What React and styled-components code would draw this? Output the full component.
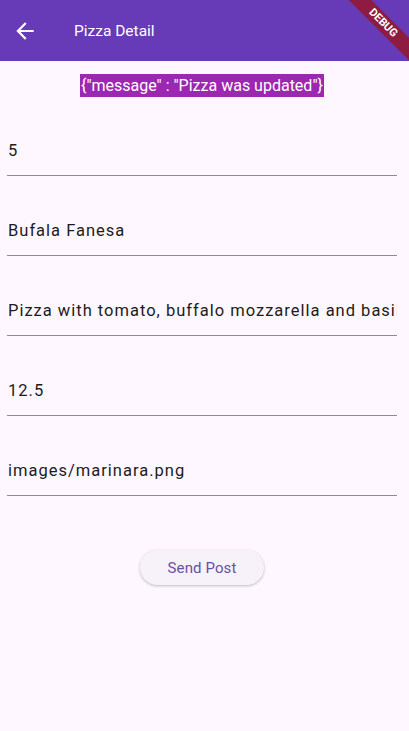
import React from "react";
import styled, { createGlobalStyle } from "styled-components";

const GlobalStyle = createGlobalStyle`
  html, body {
    margin: 0;
    padding: 0;
    background: #fef7ff;
    font-family: Roboto, "Noto Sans", sans-serif;
  }
`;

const Page = styled.div`
  position: relative;
  width: 409px;
  min-height: 731px;
  background: #fef7ff;
  overflow: hidden;
`;

const AppBar = styled.header`
  height: 61px;
  background: #673ab7;
  display: flex;
  align-items: center;
  color: #ffffff;
`;

const BackButton = styled.button`
  width: 50px;
  height: 50px;
  border: none;
  background: none;
  padding: 0;
  display: flex;
  align-items: center;
  justify-content: center;
  color: #ffffff;
`;

const Title = styled.h1`
  margin: 0 0 0 24px;
  font-size: 15.5px;
  font-weight: 400;
  color: #ffffff;
`;

// Flutter's debug ribbon in the top-right corner
const Banner = styled.div`
  position: absolute;
  top: 15px;
  right: -29px;
  width: 110px;
  height: 16px;
  background: #8e1c40;
  transform: rotate(45deg);
  color: #ffffff;
  font-size: 11px;
  font-weight: 700;
  line-height: 16px;
  text-align: center;
`;

const Content = styled.main`
  display: flex;
  flex-direction: column;
  padding: 13px 12px 0 7px;
`;

const MessageRow = styled.div`
  display: flex;
  justify-content: center;
  height: 22px;
`;

const Message = styled.span`
  background: #9c27b0;
  color: #ffffff;
  font-size: 16px;
  line-height: 23px;
  height: 23px;
  padding: 0 1px;
`;

const Field = styled.div`
  padding: 42px 0 13px;
  border-bottom: 1px solid #8e8a93;
`;

const Input = styled.input`
  display: block;
  width: 100%;
  box-sizing: border-box;
  border: none;
  outline: none;
  background: transparent;
  padding: 0 0 0 1px;
  height: 24px;
  font-family: Roboto, "Noto Sans", sans-serif;
  font-size: 16.5px;
  letter-spacing: 1px;
  color: #1d1b20;
`;

const ButtonRow = styled.div`
  display: flex;
  justify-content: center;
  margin-top: 54px;
`;

const SendButton = styled.button`
  width: 124px;
  height: 35px;
  border: none;
  border-radius: 18px;
  background: #f7f2fa;
  color: #6750a4;
  font-family: Roboto, "Noto Sans", sans-serif;
  font-size: 15px;
  letter-spacing: 0.1px;
  box-shadow: 0 1px 3px rgba(0, 0, 0, 0.25);
`;

const ArrowBack = () => (
  <svg width="26" height="26" viewBox="0 0 24 24" fill="#ffffff">
    <path d="M20 11H7.83l5.59-5.59L12 4l-8 8 8 8 1.41-1.41L7.83 13H20v-2z" />
  </svg>
);

const values = [
  "5",
  "Bufala Fanesa",
  "Pizza with tomato, buffalo mozzarella and basil",
  "12.5",
  "images/marinara.png",
];

export default function App() {
  return (
    <Page>
      <GlobalStyle />
      <AppBar>
        <BackButton aria-label="Back">
          <ArrowBack />
        </BackButton>
        <Title>Pizza Detail</Title>
      </AppBar>
      <Banner>DEBUG</Banner>
      <Content>
        <MessageRow>
          <Message>{'{"message" : "Pizza was updated"}'}</Message>
        </MessageRow>
        {values.map((v) => (
          <Field key={v}>
            <Input defaultValue={v} readOnly />
          </Field>
        ))}
        <ButtonRow>
          <SendButton>Send Post</SendButton>
        </ButtonRow>
      </Content>
    </Page>
  );
}
